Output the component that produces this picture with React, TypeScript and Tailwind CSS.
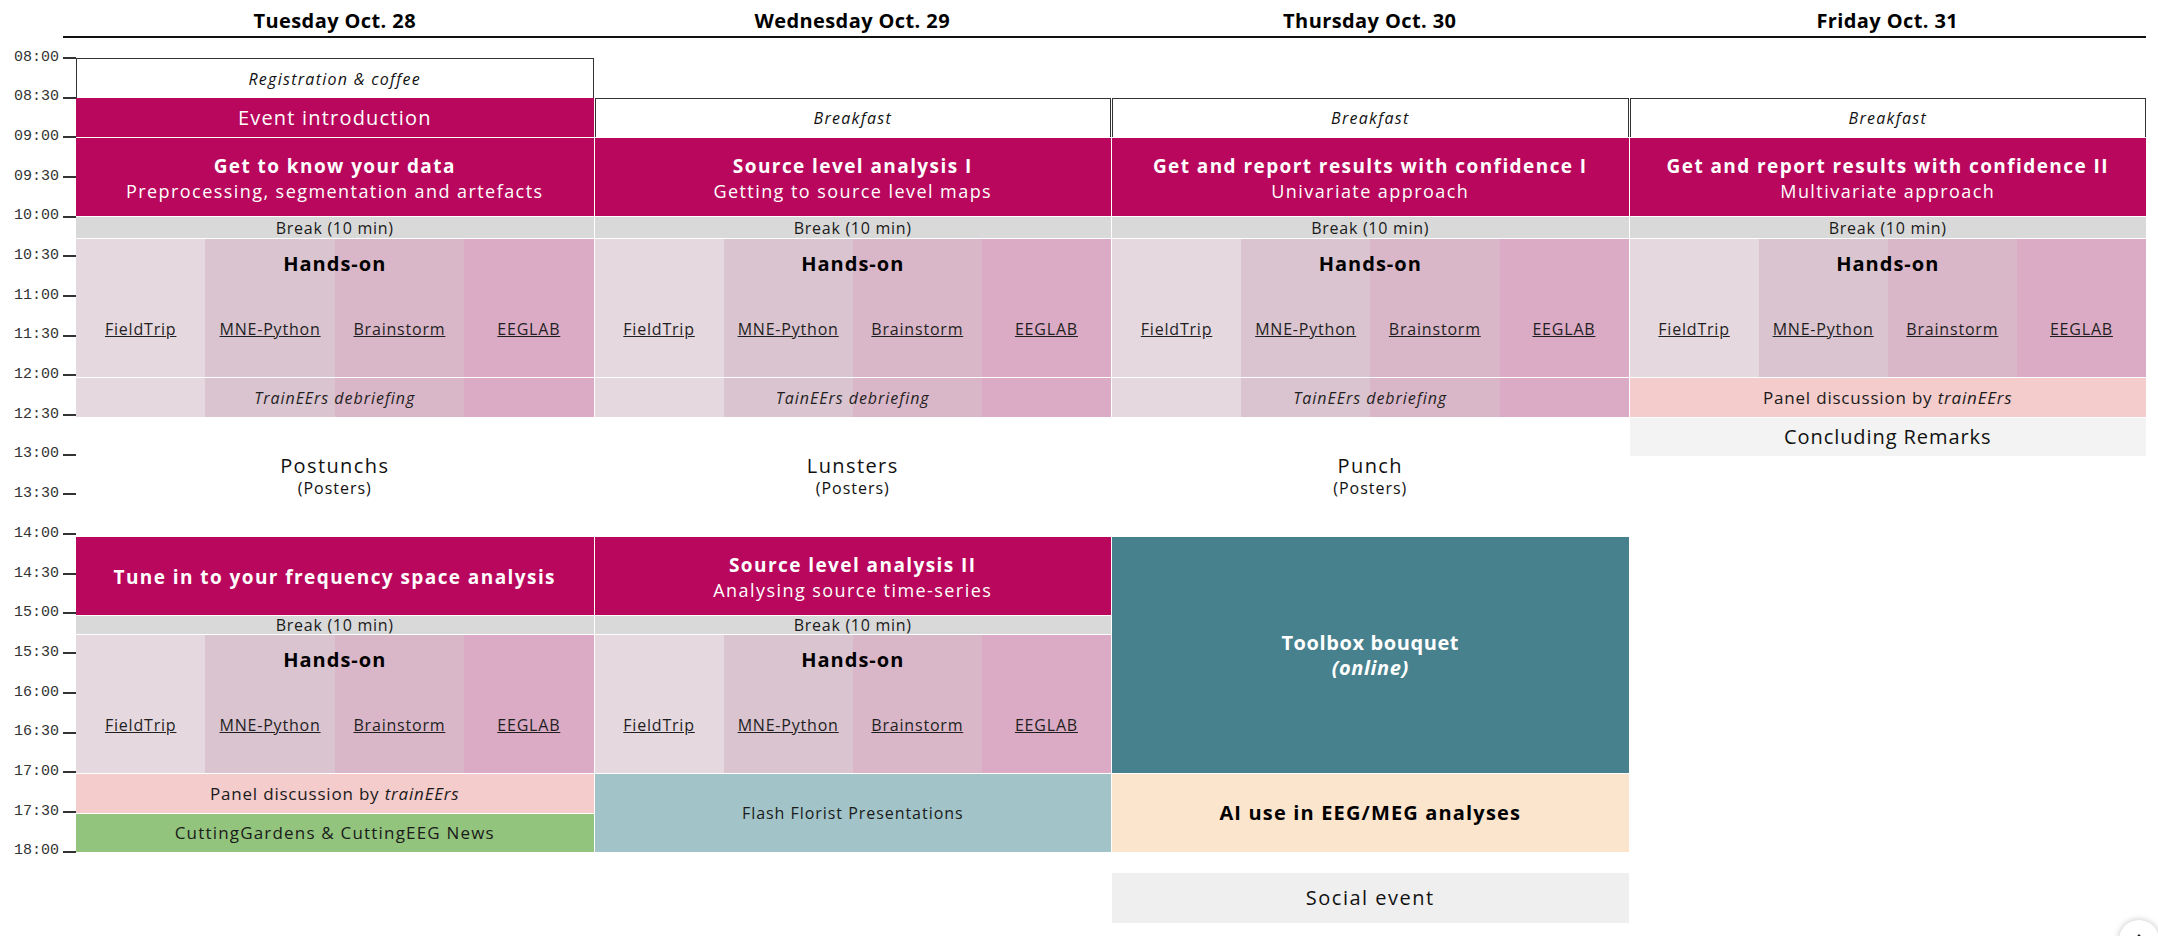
import React from 'react';
import { ArrowUp } from 'lucide-react';

const HANDS =
  'bg-[linear-gradient(to_right,#e6d8df_0_25%,#dac4cf_25%_50%,#dab7c8_50%_75%,#dbabc5_75%_100%)]';

const times = [
  '08:00', '08:30', '09:00', '09:30', '10:00', '10:30', '11:00', '11:30', '12:00', '12:30', '13:00',
  '13:30', '14:00', '14:30', '15:00', '15:30', '16:00', '16:30', '17:00', '17:30', '18:00',
];

function Session({ h, title, sub }: { h: string; title: string; sub?: string }) {
  return (
    <div className={`${h} border-t border-white bg-[#b8075c] text-white flex flex-col items-center justify-center pt-[3px] leading-[25px]`}>
      <div className="text-[19px] font-bold tracking-[0.075em]">{title}</div>
      {sub && <div className="text-[18px] tracking-[0.08em]">{sub}</div>}
    </div>
  );
}

function Break({ h }: { h: string }) {
  return (
    <div className={`${h} border-t border-white bg-[#d9d9d9] flex items-center justify-center text-[16px] tracking-[0.045em] text-[#1a1a1a]`}>
      Break (10 min)
    </div>
  );
}

function HandsOn() {
  return (
    <div className={`h-[139px] border-t border-white ${HANDS} flex flex-col`}>
      <div className="h-[50px] flex items-center justify-center text-[20px] font-bold tracking-[0.05em] text-black">Hands-on</div>
      <div className="grid grid-cols-4 h-[80px] items-center text-center text-[16px] tracking-[0.05em] text-[#1f1f1f]">
        <a href="#" className="underline">FieldTrip</a>
        <a href="#" className="underline">MNE-Python</a>
        <a href="#" className="underline">Brainstorm</a>
        <a href="#" className="underline">EEGLAB</a>
      </div>
    </div>
  );
}

function Debrief({ text }: { text: string }) {
  return (
    <div className={`h-[40px] border-t border-white ${HANDS} flex items-center justify-center italic text-[16px] tracking-[0.06em] text-[#1f1f1f]`}>
      {text}
    </div>
  );
}

function Panel() {
  return (
    <div className="h-[40px] border-t border-white bg-[#f4cccc] flex items-center justify-center text-[17px] tracking-[0.047em] text-[#1a1a1a]">
      Panel discussion by&nbsp;<i>trainEErs</i>
    </div>
  );
}

function Lunch({ title }: { title: string }) {
  return (
    <div className="h-[119px] flex flex-col items-center pt-[36px] text-[#111]">
      <div className="text-[20px] leading-[26px] tracking-[0.07em]">{title}</div>
      <div className="text-[16px] leading-[18px] tracking-[0.06em]">(Posters)</div>
    </div>
  );
}

function Boxed({ text, h }: { text: string; h: string }) {
  return (
    <div className={`${h} border border-b-0 border-[#333] bg-white flex items-center justify-center italic text-[16px] tracking-[0.08em] text-[#111]`}>
      {text}
    </div>
  );
}

export default function App() {
  return (
    <div className="relative w-[2158px] h-[936px] overflow-hidden bg-white [font-family:'Open_Sans',sans-serif]">
      {/* header */}
      <div className="ml-[63px] w-[2083px] h-[38px] border-b-2 border-[#111] pl-[13px]">
        <div className="grid grid-cols-4 h-full items-center pt-[6px] text-[20px] font-bold tracking-[0.02em] text-black">
          <div className="text-center">Tuesday Oct. 28</div>
          <div className="text-center">Wednesday Oct. 29</div>
          <div className="text-center">Thursday Oct. 30</div>
          <div className="text-center">Friday Oct. 31</div>
        </div>
      </div>

      <div className="flex">
        {/* time axis */}
        <div className="w-[76px] flex flex-col">
          {times.map((t) => (
            <div key={t} className="h-[39.7px] flex items-center justify-end">
              <span className="[font-family:'Liberation_Mono',monospace] text-[15px] text-[#333]">{t}</span>
              <span className="ml-[4px] w-[13px] h-[2px] bg-[#333]" />
            </div>
          ))}
        </div>

        {/* days */}
        <div className="w-[2070px] grid grid-cols-4 items-start">
          {/* Tuesday */}
          <div className="flex flex-col pt-[20px]">
            <Boxed h="h-[40px]" text="Registration & coffee" />
            <div className="h-[39px] bg-[#b8075c] text-white text-[20px] tracking-[0.06em] flex items-center justify-center">
              Event introduction
            </div>
            <Session h="h-[79px]" title="Get to know your data" sub="Preprocessing, segmentation and artefacts" />
            <Break h="h-[22px]" />
            <HandsOn />
            <Debrief text="TrainEErs debriefing" />
            <Lunch title="Postunchs" />
            <Session h="h-[79px]" title="Tune in to your frequency space analysis" />
            <Break h="h-[19px]" />
            <HandsOn />
            <Panel />
            <div className="h-[39px] border-t border-white bg-[#93c47d] flex items-center justify-center text-[17px] tracking-[0.07em] text-[#1a1a1a]">
              CuttingGardens &amp; CuttingEEG News
            </div>
          </div>

          {/* Wednesday */}
          <div className="flex flex-col pt-[60px] border-l border-white">
            <Boxed h="h-[39px]" text="Breakfast" />
            <Session h="h-[79px]" title="Source level analysis I" sub="Getting to source level maps" />
            <Break h="h-[22px]" />
            <HandsOn />
            <Debrief text="TainEErs debriefing" />
            <Lunch title="Lunsters" />
            <Session h="h-[79px]" title="Source level analysis II" sub="Analysing source time-series" />
            <Break h="h-[19px]" />
            <HandsOn />
            <div className="h-[79px] border-t border-white bg-[#a2c4c9] flex items-center justify-center text-[16px] tracking-[0.06em] text-[#1a1a1a]">
              Flash Florist Presentations
            </div>
          </div>

          {/* Thursday */}
          <div className="flex flex-col pt-[60px] border-l border-white">
            <Boxed h="h-[39px]" text="Breakfast" />
            <Session h="h-[79px]" title="Get and report results with confidence I" sub="Univariate approach" />
            <Break h="h-[22px]" />
            <HandsOn />
            <Debrief text="TainEErs debriefing" />
            <Lunch title="Punch" />
            <div className="h-[237px] border-t border-white bg-[#47818e] text-white flex flex-col items-center justify-center text-[20px] font-bold tracking-[0.03em] leading-[25px]">
              <div>Toolbox bouquet</div>
              <div className="italic">(online)</div>
            </div>
            <div className="h-[79px] border-t border-white bg-[#fce5cd] flex items-center justify-center text-[20px] font-bold tracking-[0.058em] text-black">
              AI use in EEG/MEG analyses
            </div>
            <div className="mt-[21px] h-[50px] bg-[#efefef] flex items-center justify-center text-[20px] tracking-[0.075em] text-[#111]">
              Social event
            </div>
          </div>

          {/* Friday */}
          <div className="flex flex-col pt-[60px] border-l border-white">
            <Boxed h="h-[39px]" text="Breakfast" />
            <Session h="h-[79px]" title="Get and report results with confidence II" sub="Multivariate approach" />
            <Break h="h-[22px]" />
            <HandsOn />
            <Panel />
            <div className="h-[39px] border-t border-white bg-[#f3f3f3] flex items-center justify-center text-[20px] tracking-[0.046em] text-[#111]">
              Concluding Remarks
            </div>
          </div>
        </div>
      </div>

      {/* back-to-top button */}
      <div className="absolute left-[2119px] top-[920px] w-10 h-10 rounded-full bg-white shadow-[0_0_6px_rgba(0,0,0,0.25)] flex items-center justify-center">
        <ArrowUp size={16} strokeWidth={2.5} className="text-[#222]" />
      </div>
    </div>
  );
}
